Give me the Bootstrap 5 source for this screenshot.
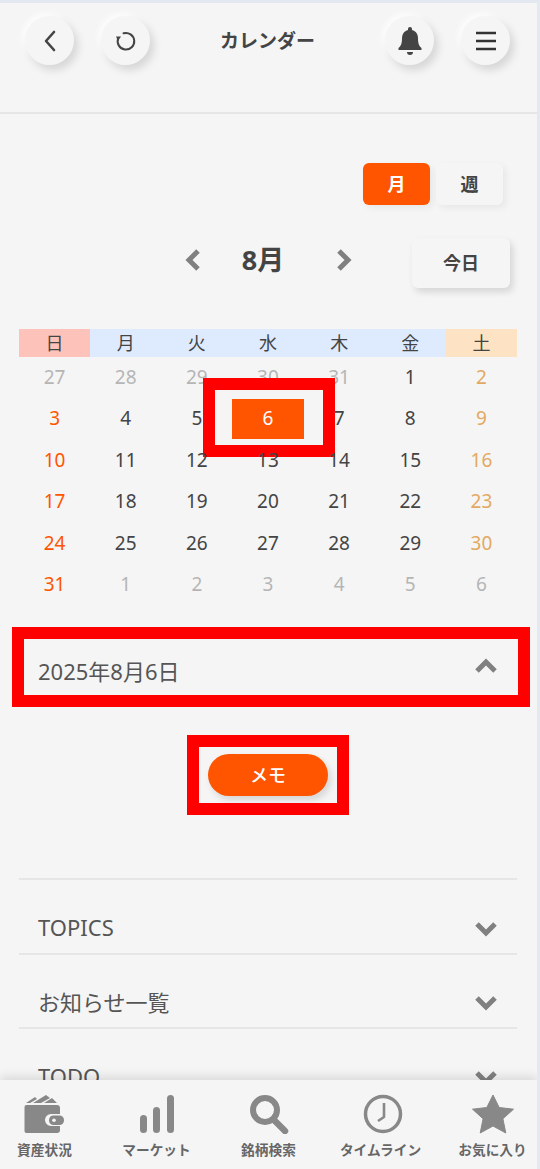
<!DOCTYPE html>
<html lang="ja">
<head>
  <meta charset="UTF-8">
  <title>カレンダー</title>
  <meta name="viewport" content="width=device-width, initial-scale=1">
  <link href="https://cdn.jsdelivr.net/npm/bootstrap@5.3.3/dist/css/bootstrap.min.css" rel="stylesheet">
  <style>
    html, body { height: 100%; }
    body {
      background: #f5f5f5;
      color: #444;
      font-family: "Noto Sans", "Noto Sans CJK JP", sans-serif;
      overflow: hidden;
    }
    .app-frame {
      height: 1169px;
      border-top: 3px solid #e4e9f1;
      border-right: 3px solid #e4e9f1;
      position: relative;
      overflow: hidden;
    }
    .top-head {
      height: 111px;
      padding: 13px 27px 0 25px;
      border-bottom: 2px solid #e6e6e6;
    }
    .head-group { gap: 27px; }
    .round-btn {
      width: 49px;
      height: 49px;
      border-radius: 50%;
      background: #f5f5f5;
      box-shadow: 4px 5px 9px rgba(0,0,0,.13), -3px -3px 6px rgba(255,255,255,.8);
      flex: none;
    }
    .head-title { width: 160px; margin-top: 11px; font-size: 19px; font-weight: 700; color: #444; }
    .view-switch { margin: 49px 34px 0 0; gap: 6px; }
    .view-btn {
      width: 67px;
      height: 42px;
      border-radius: 6px;
      font-size: 18px;
      font-weight: 700;
      background: #f5f5f5;
      color: #444;
      box-shadow: 3px 3px 7px rgba(0,0,0,.06);
    }
    .view-btn.is-on { background: #ff5500; color: #fff; }
    .month-row { height: 50px; margin-top: 33px; padding-right: 27px; }
    .month-nav { margin-bottom: 6px; }
    .month-label { width: 100px; margin: 0 22px 0 11px; text-align: center; font-size: 27px; font-weight: 700; color: #444; }
    .today-btn {
      width: 98px;
      height: 50px;
      margin-left: 59px;
      border-radius: 6px;
      background: #f5f5f5;
      font-size: 18px;
      font-weight: 700;
      color: #444;
      box-shadow: 3px 4px 7px rgba(0,0,0,.13);
    }
    .cal-wrap { margin: 41px 20px 0 19px; }
    .cal-grid { display: grid; grid-template-columns: repeat(7, 1fr); text-align: center; }
    .cal-dow { height: 28px; line-height: 28px; font-size: 18px; background: #deebff; color: #444; }
    .cal-dow.sun { background: #fdc3ba; }
    .cal-dow.sat { background: #fde3c3; }
    .cal-day { height: 41.4px; line-height: 41.4px; font-size: 19px; color: #444; position: relative; }
    .cal-day.sun { color: #ff5500; }
    .cal-day.sat { color: #e3a962; }
    .cal-day.off { color: #b5b5b5; }
    .cal-day.picked-day::before {
      content: "";
      position: absolute;
      left: 0; right: 0; top: 1px; bottom: 1px;
      background: #ff5500;
    }
    .cal-day.picked-day span { position: relative; color: #fff; }
    .mark-box { position: absolute; border: 12px solid #ff0000; pointer-events: none; }
    .mark-day { left: -29px; right: -31px; top: -20px; bottom: -17px; }
    .mark-date { left: -7px; right: -13px; top: -23px; bottom: -14px; }
    .mark-memo { left: -21px; right: -21px; top: -19px; bottom: -19px; }
    .date-row {
      position: relative;
      margin: 45px 20px 0 19px;
      height: 43px;
      padding: 0 19px;
      font-size: 22px;
      color: #555;
    }
    .date-row svg { margin-bottom: 12px; }
    .memo-btn {
      position: relative;
      width: 120px;
      height: 42px;
      margin-right: 1px;
      border-radius: 21px;
      background: #ff5500;
      color: #fff;
      font-size: 18px;
      font-weight: 500;
      box-shadow: 3px 4px 7px rgba(0,0,0,.13);
    }
    .memo-row { margin-top: 61px; }
    .acc-list { margin: 82px 20px 0 19px; border-top: 2px solid #e6e6e6; }
    .acc-row {
      height: 74.5px;
      padding: 22px 19px 0;
      font-size: 22px;
      color: #555;
      border-bottom: 2px solid #e6e6e6;
    }
    .acc-row svg { margin-top: 2px; }
    .bottom-bar {
      position: absolute;
      left: 0; right: 0; bottom: 0;
      height: 89px;
      background: #f5f5f5;
      box-shadow: 0 -3px 10px rgba(0,0,0,.12);
    }
    .bar-item { flex: none; width: 112px; color: #666; font-size: 13.7px; font-weight: 700; line-height: 17px; white-space: nowrap; }
    .bar-icon { height: 54px; }
    .bar-text { margin-top: 7px; }
  </style>
</head>
<body>
<div class="app-frame">
  <header class="top-head d-flex align-items-start">
    <div class="head-group d-flex flex-fill">
      <div class="round-btn d-flex align-items-center justify-content-center">
        <svg width="14" height="22" viewBox="0 0 14 22"><path d="M11 2 3 11l8 9" fill="none" stroke="#444" stroke-width="2.6" stroke-linecap="round" stroke-linejoin="round"/></svg>
      </div>
      <div class="round-btn d-flex align-items-center justify-content-center">
        <svg width="22" height="22" viewBox="0 0 22 22"><path d="M8.500 3.300A8.300 8.300 0 1 1 3.100 8.500" fill="none" stroke="#444" stroke-width="2" stroke-linecap="round"/><path d="M1 6.500h5L3 11z" fill="#444"/></svg>
      </div>
    </div>
    <div class="head-title text-center">カレンダー</div>
    <div class="head-group d-flex flex-fill justify-content-end">
      <div class="round-btn d-flex align-items-center justify-content-center">
        <svg width="24" height="30" viewBox="0 0 24 30"><path d="M12 1c1.200 0 2 .9 2 2v1c4 1 6 4.300 6 8.500 0 5 1.200 7.500 3.500 9.500v2H.5v-2C2.800 20 4 17.500 4 12.500 4 8.300 6 5 10 4V3c0-1.100.8-2 2-2z" fill="#444"/><path d="M9 26h6a3 3 0 0 1-6 0z" fill="#444"/></svg>
      </div>
      <div class="round-btn d-flex align-items-center justify-content-center">
        <svg width="22" height="20" viewBox="0 0 22 20"><path d="M1 2h20M1 10h20M1 18h20" stroke="#333" stroke-width="2.400"/></svg>
      </div>
    </div>
  </header>

  <div class="d-flex justify-content-end">
    <div class="view-switch d-flex">
      <div class="view-btn is-on d-flex align-items-center justify-content-center">月</div>
      <div class="view-btn d-flex align-items-center justify-content-center">週</div>
    </div>
  </div>

  <div class="month-row d-flex align-items-center justify-content-end">
    <div class="month-nav d-flex align-items-center">
      <svg width="18" height="24" viewBox="0 0 18 24"><path d="M14 3 5 12l9 9" fill="none" stroke="#808080" stroke-width="5"/></svg>
      <div class="month-label">8月</div>
      <svg width="18" height="24" viewBox="0 0 18 24"><path d="m4 3 9 9-9 9" fill="none" stroke="#808080" stroke-width="5"/></svg>
    </div>
    <div class="today-btn d-flex align-items-center justify-content-center">今日</div>
  </div>

  <div class="cal-wrap">
    <div class="cal-grid">
      <div class="cal-dow sun">日</div><div class="cal-dow">月</div><div class="cal-dow">火</div><div class="cal-dow">水</div><div class="cal-dow">木</div><div class="cal-dow">金</div><div class="cal-dow sat">土</div>
    </div>
    <div class="cal-grid" id="calDays"></div>
  </div>

  <div class="date-row d-flex align-items-center justify-content-between">
    <span>2025年8月6日</span>
    <svg width="24" height="16" viewBox="0 0 24 16"><path d="m3 13 9-9 9 9" fill="none" stroke="#808080" stroke-width="5"/></svg>
    <div class="mark-box mark-date"></div>
  </div>

  <div class="memo-row d-flex justify-content-center">
    <div class="memo-btn d-flex align-items-center justify-content-center">
      メモ
      <div class="mark-box mark-memo"></div>
    </div>
  </div>

  <div class="acc-list">
    <div class="acc-row d-flex align-items-center justify-content-between">
      <span>TOPICS</span>
      <svg width="24" height="16" viewBox="0 0 24 16"><path d="m3 3 9 9 9-9" fill="none" stroke="#808080" stroke-width="5"/></svg>
    </div>
    <div class="acc-row d-flex align-items-center justify-content-between">
      <span>お知らせ一覧</span>
      <svg width="24" height="16" viewBox="0 0 24 16"><path d="m3 3 9 9 9-9" fill="none" stroke="#808080" stroke-width="5"/></svg>
    </div>
    <div class="acc-row d-flex align-items-center justify-content-between">
      <span>TODO</span>
      <svg width="24" height="16" viewBox="0 0 24 16"><path d="m3 3 9 9 9-9" fill="none" stroke="#808080" stroke-width="5"/></svg>
    </div>
  </div>

  <nav class="bottom-bar d-flex justify-content-center text-center">
    <div class="bar-item">
      <div class="bar-icon d-flex align-items-end justify-content-center">
        <svg width="42" height="40" viewBox="0 0 42 40">
          <path d="M2 9 11 3l2 2-7 4zM9 9 22 1l4 3-9 5zM20 9l8-5 5 5z" fill="#888"/>
          <path d="M2.500 11H33a3 3 0 0 1 3 3v6H27a6 6 0 0 0 0 12h9v4a3 3 0 0 1-3 3H2.500A2 2 0 0 1 .5 37V13a2 2 0 0 1 2-2z" fill="#888"/>
          <rect x="25" y="21.500" width="15" height="9.500" rx="4.500" fill="#888"/>
          <circle cx="30" cy="26.200" r="1.800" fill="#f5f5f5"/>
        </svg>
      </div>
      <div class="bar-text">資産状況</div>
    </div>
    <div class="bar-item">
      <div class="bar-icon d-flex align-items-end justify-content-center">
        <svg width="36" height="40" viewBox="0 0 36 40"><rect x="1" y="21" width="7" height="18" rx="3.500" fill="#888"/><rect x="14" y="13" width="7" height="26" rx="3.500" fill="#888"/><rect x="28" y="1" width="7" height="38" rx="3.500" fill="#888"/></svg>
      </div>
      <div class="bar-text">マーケット</div>
    </div>
    <div class="bar-item">
      <div class="bar-icon d-flex align-items-end justify-content-center">
        <svg width="40" height="40" viewBox="0 0 40 40"><circle cx="16" cy="16" r="12" fill="none" stroke="#888" stroke-width="6"/><path d="m25 26 11 11" stroke="#888" stroke-width="6.500" stroke-linecap="round"/></svg>
      </div>
      <div class="bar-text">銘柄検索</div>
    </div>
    <div class="bar-item">
      <div class="bar-icon d-flex align-items-end justify-content-center">
        <svg class="ms-1" width="40" height="40" viewBox="0 0 40 40"><circle cx="20" cy="20" r="17.500" fill="none" stroke="#888" stroke-width="3.500"/><path d="M21 9v14l-6 4" fill="none" stroke="#888" stroke-width="2.600" stroke-linejoin="round"/></svg>
      </div>
      <div class="bar-text">タイムライン</div>
    </div>
    <div class="bar-item">
      <div class="bar-icon d-flex align-items-end justify-content-center">
        <svg width="42" height="40" viewBox="0 0 42 40"><path d="m21 1 6.200 12.500 14.300 1.700-10.600 9.600 2.900 14.200L21 32l-12.800 7 2.900-14.200L.5 15.200l14.300-1.700z" fill="#888" stroke="#888" stroke-linejoin="round"/></svg>
      </div>
      <div class="bar-text">お気に入り</div>
    </div>
  </nav>
</div>

<script>
  // 2025年8月 カレンダーのセル生成
  const days = [27,28,29,30,31,1,2, 3,4,5,6,7,8,9, 10,11,12,13,14,15,16, 17,18,19,20,21,22,23, 24,25,26,27,28,29,30, 31,1,2,3,4,5,6];
  const grid = document.getElementById("calDays");
  days.forEach((d, i) => {
    const cell = document.createElement("div");
    const off = i < 5 || i > 35;
    let cls = "cal-day";
    if (off) cls += " off";
    else if (i % 7 === 0) cls += " sun";
    else if (i % 7 === 6) cls += " sat";
    if (i === 10) cls += " picked-day";
    cell.className = cls;
    cell.innerHTML = "<span>" + d + "</span>";
    if (i === 10) {
      const box = document.createElement("div");
      box.className = "mark-box mark-day";
      cell.appendChild(box);
    }
    grid.appendChild(cell);
  });
</script>
<script src="https://cdn.jsdelivr.net/npm/bootstrap@5.3.3/dist/js/bootstrap.bundle.min.js"></script>
</body>
</html>
